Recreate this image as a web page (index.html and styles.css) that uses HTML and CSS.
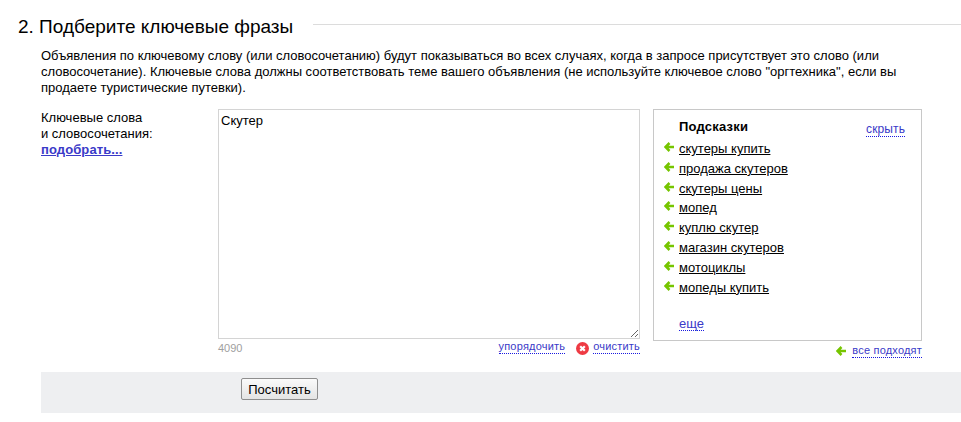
FILE: index.html
```html
<!DOCTYPE html>
<html lang="ru">
<head>
<meta charset="utf-8">
<title>Подберите ключевые фразы</title>
<link rel="stylesheet" href="styles.css">
</head>
<body>
<svg class="defs" width="0" height="0" aria-hidden="true">
  <symbol id="arrow" viewBox="0 0 10 10">
    <path d="M5.5 1 1.5 5l4 4M2 5h8" fill="none" stroke="#76c500" stroke-width="2.5"/>
  </symbol>
</svg>
<header class="step-head">
  <h2 class="step-title">2. Подберите ключевые фразы</h2>
  <div class="step-rule"></div>
</header>
<main class="content">
  <p class="intro">Объявления по ключевому слову (или словосочетанию) будут показываться во всех случаях, когда в запросе присутствует это слово (или словосочетание). Ключевые слова должны соответствовать теме вашего объявления (не используйте ключевое слово "оргтехника", если вы продаете туристические путевки).</p>
  <div class="form-row">
    <div class="label-col">
      <div>Ключевые слова<br>и словосочетания:</div>
      <a class="pick" href="#">подобрать...</a>
    </div>
    <div class="field-col">
      <textarea class="keywords">Скутер</textarea>
      <div class="field-foot">
        <span class="counter">4090</span>
        <span class="foot-actions">
          <a class="dotted" href="#">упорядочить</a>
          <svg class="clear-icon" width="13" height="13" viewBox="0 0 13 13"><circle cx="6.5" cy="6.5" r="6.5" fill="#ee3a43"/><path d="M4.2 4.2l4.6 4.6M8.8 4.2l-4.6 4.6" stroke="#fff" stroke-width="2.2"/></svg>
          <a class="dotted clear-link" href="#">очистить</a>
        </span>
      </div>
    </div>
    <div class="hints-col">
      <aside class="hints">
        <div class="hints-head">
          <strong class="hints-title">Подсказки</strong>
          <a class="dotted hide-link" href="#">скрыть</a>
        </div>
        <ul class="hint-list">
          <li class="hint"><svg class="arrow"><use href="#arrow"/></svg><a href="#">скутеры купить</a></li>
          <li class="hint"><svg class="arrow"><use href="#arrow"/></svg><a href="#">продажа скутеров</a></li>
          <li class="hint"><svg class="arrow"><use href="#arrow"/></svg><a href="#">скутеры цены</a></li>
          <li class="hint"><svg class="arrow"><use href="#arrow"/></svg><a href="#">мопед</a></li>
          <li class="hint"><svg class="arrow"><use href="#arrow"/></svg><a href="#">куплю скутер</a></li>
          <li class="hint"><svg class="arrow"><use href="#arrow"/></svg><a href="#">магазин скутеров</a></li>
          <li class="hint"><svg class="arrow"><use href="#arrow"/></svg><a href="#">мотоциклы</a></li>
          <li class="hint"><svg class="arrow"><use href="#arrow"/></svg><a href="#">мопеды купить</a></li>
        </ul>
        <a class="dotted more" href="#">еще</a>
      </aside>
      <div class="all-fit">
        <svg class="arrow"><use href="#arrow"/></svg>
        <a class="dotted" href="#">все подходят</a>
      </div>
    </div>
  </div>
  <div class="actions">
    <button class="calc" type="button">Посчитать</button>
  </div>
</main>
</body>
</html>
```
FILE: styles.css
```css
* { box-sizing: border-box; }
html, body { margin: 0; padding: 0; }
body {
  width: 961px;
  height: 422px;
  overflow: hidden;
  background: #fff;
  color: #000;
  font-family: "Liberation Sans", Arial, sans-serif;
  font-size: 13px;
  line-height: 16px;
}
.defs { position: absolute; }
a { color: #000; }

.step-head { display: flex; align-items: flex-start; padding: 16px 0 0 18px; height: 48px; }
.step-title { margin: 0; font-size: 19px; font-weight: 400; line-height: 21px; white-space: nowrap; }
.step-rule { flex: 1; margin: 8px 0 0 20px; height: 1px; background: #dcdcdc; }

.content { padding-left: 41px; }
.intro { margin: 0; width: 880px; height: 61px; }

.form-row { display: flex; align-items: flex-start; height: 263px; }
.label-col { width: 177px; padding-top: 1px; }
.pick { color: #3a3ac8; font-weight: 700; letter-spacing: 0.1px; }

.field-col { width: 422px; }
.keywords {
  display: block;
  width: 422px;
  height: 230px;
  margin: 0;
  padding: 3px 0 0 2px;
  border: 1px solid #d4d4d4;
  outline: none;
  font: inherit;
  color: #000;
  resize: both;
}
.field-foot { display: flex; justify-content: space-between; height: 18px; padding-top: 1px; }
.counter { color: #a0a0a0; font-size: 11px; }
.foot-actions { display: flex; align-items: flex-start; }
.clear-icon { margin: 2px 0 0 11px; }
.clear-link { margin-left: 4px; letter-spacing: 0.42px; }

.dotted {
  color: #3a3ac8;
  font-size: 11px;
  letter-spacing: 0.2px;
  line-height: 13px;
  text-decoration: none;
  border-bottom: 1px dotted #1a1ae0;
}

.hints-col { width: 269px; margin-left: 13px; }
.hints {
  position: relative;
  height: 232px;
  padding: 9px 16px 0 25px;
  border: 1px solid #c8c8c8;
}
.hints-head { display: flex; justify-content: space-between; align-items: flex-start; height: 20px; }
.hints-title { letter-spacing: 0.2px; }
.hide-link { margin-top: 4px; font-size: 12px; letter-spacing: 0.1px; }
.hint-list { margin: 0; padding: 0; list-style: none; }
.hint { position: relative; height: 19.8px; padding-top: 2px; white-space: nowrap; }
.hint a { text-decoration: underline; }
.hint .arrow { position: absolute; left: -15px; top: 3px; }
.arrow { width: 10px; height: 10px; }
.more { position: absolute; left: 25px; bottom: 9px; font-size: 13px; letter-spacing: 0; }
.all-fit { display: flex; justify-content: flex-end; align-items: center; gap: 6px; padding-top: 2px; height: 18px; }

.actions { height: 41px; margin-top: 0; padding: 6px 0 0 200px; background: #eeeff1; }
.calc {
  width: 77px;
  height: 22px;
  padding: 0;
  border: 1px solid #8e8e8e;
  border-radius: 2px;
  background: linear-gradient(#fafafa, #e4e4e4);
  color: #000;
  font: 13px "Liberation Sans", Arial, sans-serif;
}
```
